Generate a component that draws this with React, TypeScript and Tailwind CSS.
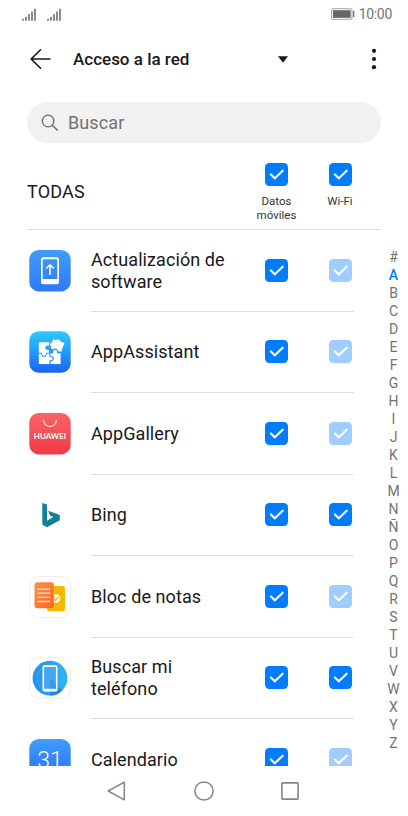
import React from 'react';

interface AppRow {
    name: string;
    icon: React.ComponentType;
    wifiLocked: boolean;
}

const iconClass = 'block w-[42px] h-[42px]';

const UpdateIcon = () => (
    <svg viewBox="0 0 42 42" className={iconClass}>
        <defs>
            <linearGradient id="update" x1="0" y1="0" x2="0" y2="1">
                <stop offset="0" stopColor="#3f9dfb" />
                <stop offset="1" stopColor="#2f78f6" />
            </linearGradient>
        </defs>
        <rect x="0.3" y="0" width="41.4" height="41.4" rx="9.5" fill="url(#update)" />
        <path fillRule="evenodd" fill="#fff" d="M14.5 7.2h13a2.5 2.5 0 0 1 2.5 2.5v22a2.5 2.5 0 0 1-2.5 2.5h-13a2.5 2.5 0 0 1-2.5-2.5v-22a2.5 2.5 0 0 1 2.5-2.5zM13.7 10.1v18.8h14.6V10.1a.9.9 0 0 0-.9-.9H14.6a.9.9 0 0 0-.9.9z" />
        <path d="M21 25V15M17.2 18.5L21 14.7L24.8 18.5" fill="none" stroke="#fff" strokeWidth="1.5" />
    </svg>
);

const AssistantIcon = () => (
    <svg viewBox="0 0 42 42" className={iconClass}>
        <defs>
            <linearGradient id="assistant" x1="0" y1="0" x2="0" y2="1">
                <stop offset="0" stopColor="#2bcbfd" />
                <stop offset="0.5" stopColor="#219bfa" />
                <stop offset="1" stopColor="#1b62f3" />
            </linearGradient>
        </defs>
        <rect x="0.3" y="0.3" width="41.4" height="41.4" rx="9.5" fill="url(#assistant)" />
        <g fill="#fff">
            <path d="M9.8 11.3H20v3.5c-2.4-.8-3.8.4-3.8 1.9s1.4 2.7 3.8 2v3h-3.2c.5 2-.5 3-1.8 3s-2.3-1-1.9-3H9.8z" />
            <path d="M9.8 22.7h2.3c0 2 1.2 3.1 2.8 3.1s2.8-1.1 2.8-3.1h2.8v3.4c2-.9 3.1.1 3.1 1.4s-1.1 2.3-3.1 1.4v4H9.8z" />
            <path d="M21.6 22.2h2.7c-.5-2.2.5-3.3 1.8-3.3s2.4 1.1 1.8 3.3h3.7v10.7H21.6v-2.6c2.1 0 3.2-1.2 3.2-2.8s-1.1-2.8-3.2-2.8z" />
            <path d="M24 8.2l3.1 1.1c.9-1.9 4-1.3 3.8 1l4.6 1.6-3.4 9-3.5-1.2c0-2.1-2.9-3-4.1-1.3l-2.9-1.1.9-2.6c-2.1-.3-2-3.3.6-3.3z" />
        </g>
    </svg>
);

const GalleryIcon = () => (
    <svg viewBox="0 0 42 42" className={iconClass}>
        <defs>
            <linearGradient id="gallery" x1="0" y1="0" x2="0" y2="1">
                <stop offset="0" stopColor="#fa6366" />
                <stop offset="1" stopColor="#ef3b48" />
            </linearGradient>
        </defs>
        <rect x="0.3" y="0" width="41.4" height="41.4" rx="9.5" fill="url(#gallery)" />
        <path d="M14.6 7.2a6.4 6.4 0 0 0 12.8 0" fill="none" stroke="#ffe1df" strokeWidth="1.1" strokeLinecap="round" />
        <text x="21" y="26" textAnchor="middle" fill="#fff" fontFamily="Lato, sans-serif" fontWeight="700" fontSize="7.6" textLength="32.5" lengthAdjust="spacingAndGlyphs">HUAWEI</text>
    </svg>
);

const BingIcon = () => (
    <svg viewBox="0 0 42 42" className={iconClass}>
        <path d="M13.3 9l4.7 1.6v16.2l6.2-3.7-3-1.4-2-4.9 11.6 4.1v5.3L18 33.3l-4.7-2.7z" fill="#0f8296" />
    </svg>
);

const NotesIcon = () => (
    <svg viewBox="0 0 42 42" className={iconClass}>
        <defs>
            <linearGradient id="notes" x1="0" y1="0" x2="1" y2="1">
                <stop offset="0" stopColor="#ff9146" />
                <stop offset="1" stopColor="#f96424" />
            </linearGradient>
        </defs>
        <rect x="0.5" y="0.5" width="41" height="41" rx="9.5" fill="#fff" stroke="#eeeeee" />
        <rect x="18" y="10" width="18" height="25.3" rx="2.5" fill="#f5b800" />
        <circle cx="27" cy="22.5" r="4.4" fill="#fff3d0" />
        <path d="M24.8 22.7l1.7 1.6 3.2-3.4" fill="none" stroke="#f5b800" strokeWidth="1.2" />
        <rect x="5.5" y="6.3" width="19.3" height="26" rx="2.8" fill="url(#notes)" />
        <path d="M9.2 13.2h11.6M9.2 17.3h11.6M9.2 21.4h11.6M9.2 25.5h11.6" stroke="#ffe0cc" strokeWidth="1.4" strokeLinecap="round" />
    </svg>
);

const FindPhoneIcon = () => (
    <svg viewBox="0 0 42 42" className={iconClass}>
        <defs>
            <linearGradient id="find" x1="0" y1="0" x2="1" y2="0">
                <stop offset="0" stopColor="#278fe8" />
                <stop offset="1" stopColor="#2fb4f2" />
            </linearGradient>
        </defs>
        <rect x="0.5" y="0.5" width="41" height="41" rx="9.5" fill="#fff" stroke="#eeeeee" />
        <circle cx="21" cy="21.2" r="17.4" fill="url(#find)" />
        <path d="M21 21.2L33.2 33.7A17.4 17.4 0 0 1 21 38.6z" fill="#2184e2" />
        <circle cx="21" cy="21.2" r="13" fill="none" stroke="#5cbcf5" strokeOpacity="0.6" strokeWidth="0.6" />
        <rect x="14.3" y="9.1" width="13.4" height="24.6" rx="1" fill="#45a5ef" stroke="#fff" strokeWidth="1.6" />
        <path d="M21 21.2l5.9 6v4.8H21z" fill="#369aea" />
        <path d="M14.3 33h13.4" stroke="#fff" strokeWidth="2.4" />
    </svg>
);

const CalendarIcon = () => (
    <svg viewBox="0 0 42 42" className={iconClass}>
        <defs>
            <linearGradient id="calendar" x1="0" y1="0" x2="0" y2="1">
                <stop offset="0" stopColor="#419dfb" />
                <stop offset="1" stopColor="#2a6df5" />
            </linearGradient>
        </defs>
        <rect x="0.3" y="0" width="41.4" height="41.4" rx="9.5" fill="url(#calendar)" />
        <text x="21" y="28.5" textAnchor="middle" fill="#fff" fontFamily="Roboto, sans-serif" fontWeight="300" fontSize="23">31</text>
    </svg>
);

const apps: AppRow[] = [
    { name: 'Actualización de software', icon: UpdateIcon, wifiLocked: true },
    { name: 'AppAssistant', icon: AssistantIcon, wifiLocked: true },
    { name: 'AppGallery', icon: GalleryIcon, wifiLocked: true },
    { name: 'Bing', icon: BingIcon, wifiLocked: false },
    { name: 'Bloc de notas', icon: NotesIcon, wifiLocked: true },
    { name: 'Buscar mi teléfono', icon: FindPhoneIcon, wifiLocked: false },
    { name: 'Calendario', icon: CalendarIcon, wifiLocked: true }
];

const letters = '#ABCDEFGHIJKLMNÑOPQRSTUVWXYZ'.split('');

const Checkbox = ({ locked = false }: { locked?: boolean }) => (
    <svg viewBox="0 0 23 23" className="block w-[23px] h-[23px] shrink-0">
        <rect width="23" height="23" rx="4.2" fill={locked ? '#a0ccff' : '#007dff'} />
        <path d="M5.9 11.4l3.9 3.9 7.9-7.6" fill="none" stroke="#fff" strokeWidth="2.1" strokeLinecap="round" />
    </svg>
);

const Signal = () => (
    <svg viewBox="0 0 14 13" className="block w-[14px] h-[13px]">
        <path d="M1 10.8v2M4 8.7v4.1M7 6.1v6.7M10 3.5v9.3M13 0.8v12" stroke="#666" strokeWidth="1.5" />
    </svg>
);

const App: React.FC = () => {
    return (
        <div className="w-[408px] h-[816px] flex flex-col overflow-hidden bg-white font-['Roboto',sans-serif] text-[#191919]">
            {/* Status bar */}
            <div className="h-7 flex items-center shrink-0 pl-[22px] pr-4">
                <Signal />
                <div className="w-[10.5px]" />
                <Signal />
                <svg viewBox="0 0 24 12" className="ml-auto mr-1 w-6 h-3">
                    <rect x="0.6" y="0.8" width="20.4" height="10.4" rx="1.2" fill="#fff" stroke="#a3a3a3" strokeWidth="1.1" />
                    <rect x="2" y="2.2" width="17.6" height="7.6" fill="#666" />
                    <rect x="22" y="3" width="1.4" height="6" fill="#777" />
                </svg>
                <span className="text-[14px] leading-none text-[#757575] tracking-[-0.3px]">10:00</span>
            </div>

            {/* Title bar */}
            <div className="h-[62px] flex items-center shrink-0 pl-[30px]">
                <svg viewBox="0 0 22 22" className="w-[22px] h-[22px]">
                    <path d="M20.5 11H1.3M11 1.2L1.2 11L11 20.8" fill="none" stroke="#191919" strokeWidth="1.6" />
                </svg>
                <h1 className="ml-[21px] w-[205px] text-[17px] leading-5 font-medium">Acceso a la red</h1>
                <svg viewBox="0 0 10 7" className="w-[10px] h-[7px] mt-px">
                    <path d="M0 0.3h10L5 6.7z" fill="#191919" />
                </svg>
                <svg viewBox="0 0 6 22" className="ml-[83px] w-[6px] h-[22px]">
                    <g fill="#191919">
                        <circle cx="3" cy="2.8" r="2.1" />
                        <circle cx="3" cy="11" r="2.1" />
                        <circle cx="3" cy="19.2" r="2.1" />
                    </g>
                </svg>
            </div>

            {/* Search */}
            <div className="h-[41px] mt-3 ml-[27px] w-[354px] flex items-center shrink-0 rounded-full bg-[#f1f1f1] pl-[14px]">
                <svg viewBox="0 0 18 18" className="w-[18px] h-[18px]">
                    <circle cx="7.1" cy="7" r="5.8" fill="none" stroke="#6a6a6a" strokeWidth="1.3" />
                    <path d="M11.3 11.2l5.4 5.3" stroke="#6a6a6a" strokeWidth="1.5" />
                </svg>
                <span className="ml-[9px] text-[18px] leading-none text-[#717171] tracking-[0.1px]">Buscar</span>
            </div>

            {/* Column headers */}
            <div className="ml-[27px] w-[354px] h-[87px] flex shrink-0 border-b border-[#dedede]">
                <span className="w-[218px] pt-[38px] text-[18px] leading-[22px] tracking-[0.2px]">TODAS</span>
                <div className="w-[63px] pt-5 flex flex-col items-center">
                    <Checkbox />
                    <span className="mt-[9px] text-[11.5px] leading-[13.5px] text-center text-[#333]">Datos<br />móviles</span>
                </div>
                <div className="w-16 pt-5 flex flex-col items-center">
                    <Checkbox />
                    <span className="mt-[9px] text-[11.5px] leading-[13.5px] text-[#333]">Wi-Fi</span>
                </div>
            </div>

            {/* App list and alphabet index */}
            <div className="h-[536px] flex shrink-0 overflow-hidden">
                <div className="w-[354px] pl-[29px]">
                    {apps.map((app) => {
                        const Icon = app.icon;
                        return (
                            <div key={app.name} className="h-[81.5px] flex items-center">
                                <Icon />
                                <div className="ml-5 w-[263px] h-full flex items-center border-b border-[#dedede]">
                                    <span className="w-[174px] pt-px pr-8 text-[18px] leading-[22px] tracking-[0.08px]">{app.name}</span>
                                    <Checkbox locked={false} />
                                    <div className="w-[41px]" />
                                    <Checkbox locked={app.wifiLocked} />
                                </div>
                            </div>
                        );
                    })}
                </div>
                <div className="ml-auto w-[29px] pt-[18px] flex flex-col items-center">
                    {letters.map((letter) => (
                        <span
                            key={letter}
                            className={`h-[18px] text-[14px] leading-[18px] ${letter === 'A' ? 'font-medium text-[#007dff]' : 'text-[#737373]'}`}
                        >
                            {letter}
                        </span>
                    ))}
                </div>
            </div>

            {/* Navigation bar */}
            <div className="h-[50px] flex items-center shrink-0 pl-[107px]">
                <svg viewBox="0 0 20 20" className="w-5 h-5">
                    <path d="M17.3 1.2v17.6L1.2 10z" fill="none" stroke="#858585" strokeWidth="1.5" strokeLinejoin="round" />
                </svg>
                <svg viewBox="0 0 20 20" className="ml-[67px] w-5 h-5">
                    <circle cx="10" cy="10" r="9.1" fill="none" stroke="#858585" strokeWidth="1.5" />
                </svg>
                <svg viewBox="0 0 20 20" className="ml-[66px] w-5 h-5">
                    <rect x="1.9" y="1.9" width="16.2" height="16.2" rx="0.8" fill="none" stroke="#858585" strokeWidth="1.6" />
                </svg>
            </div>
        </div>
    );
};

export default App;
